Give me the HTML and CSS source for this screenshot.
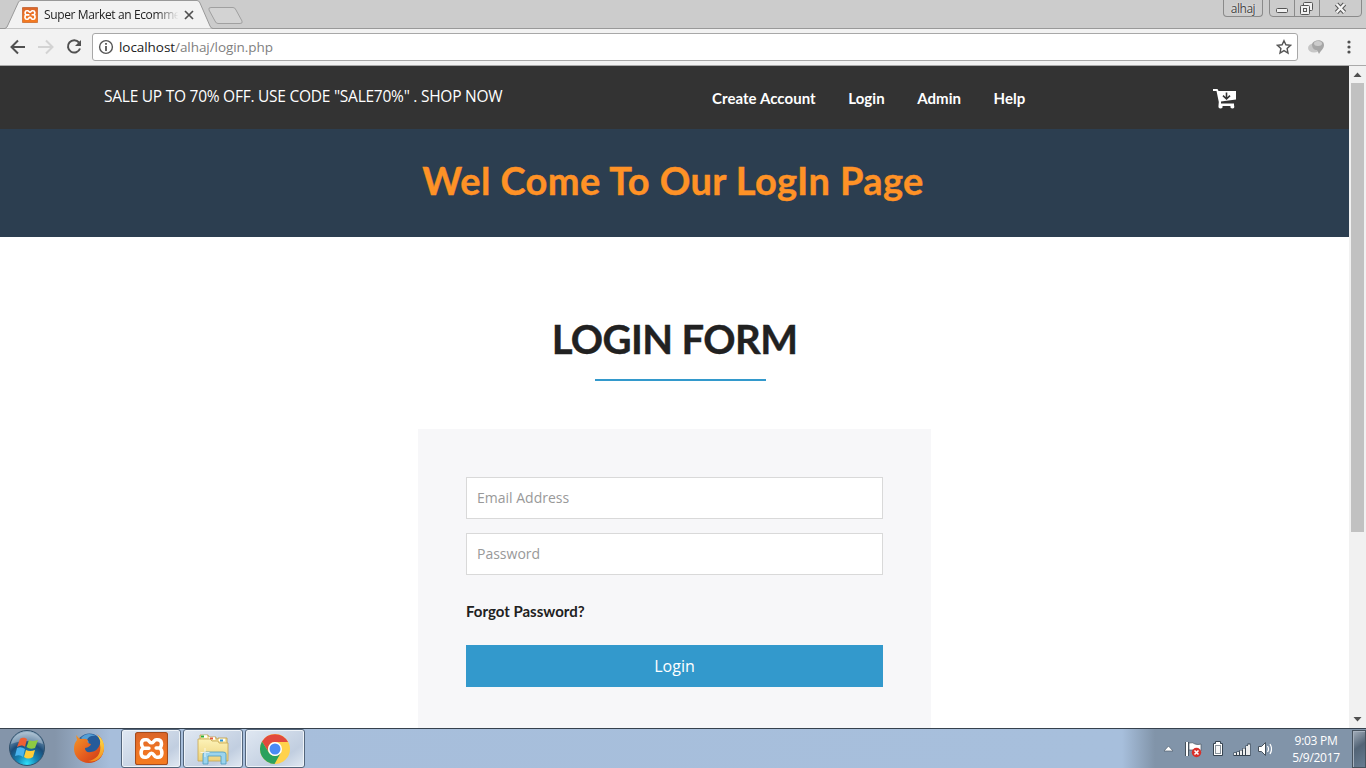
FILE: index.html
```
<!DOCTYPE html>
<html lang="en">
<head>
<meta charset="utf-8">
<title>Super Market an Ecommerce</title>
<link rel="stylesheet" href="styles.css">
</head>
<body>
<svg class="defs" width="0" height="0">
  <defs>
    <linearGradient id="orange" x1="0" y1="0" x2="0" y2="1"><stop offset="0" stop-color="#d9652a"/><stop offset=".5" stop-color="#ee7325"/><stop offset="1" stop-color="#f47b20"/></linearGradient>
    <radialGradient id="orb" cx=".5" cy=".95" r=".95"><stop offset="0" stop-color="#2fe0fa"/><stop offset=".3" stop-color="#1585b5"/><stop offset=".6" stop-color="#1b4c79"/><stop offset="1" stop-color="#9db7cb"/></radialGradient>
    <linearGradient id="fox" x1="0" y1="0" x2="1" y2="1"><stop offset="0" stop-color="#f49b25"/><stop offset=".5" stop-color="#e66020"/><stop offset="1" stop-color="#c93214"/></linearGradient>
    <linearGradient id="foxtail" x1="0" y1="0" x2="0" y2="1"><stop offset="0" stop-color="#ffe44a"/><stop offset="1" stop-color="#f38b1c"/></linearGradient>
    <linearGradient id="folder" x1="0" y1="0" x2="0" y2="1"><stop offset="0" stop-color="#fdf3b8"/><stop offset="1" stop-color="#edd27b"/></linearGradient>
    <symbol id="xampp" viewBox="0 0 32 32">
      <rect x=".5" y=".5" width="31" height="31" rx="2" fill="url(#orange)" stroke="#a54b1c"/>
      <path d="M9.500 7.500H11.500C13.500 7.500 14 10.500 16 10.500C18 10.500 18.500 7.500 20.500 7.500H22C26.500 7.500 26.500 13 24 15.500C27 18 27 24.500 22.500 24.500H21C18.500 24.500 18.500 20.500 16 20.500C13.500 20.500 13.500 24.500 11 24.500H9.500C5 24.500 5 18 8 15.500C5.500 13 5.500 7.500 9.500 7.500ZM8 15.700H13.500M20.500 15.500H24" fill="none" stroke="#fff" stroke-width="3.400" stroke-linejoin="round" stroke-linecap="round"/>
    </symbol>
  </defs>
</svg>
<div class="screen">
  <header class="tabstrip">
    <svg class="tabshape" width="250" height="29" viewBox="0 0 250 29">
      <path d="M0 28.500H5L7 27L18.500 2Q19.500 .5 21 .5H197Q199 .5 200 3L210 26Q211 28.500 213 28.500H250" fill="#f2f2f2" stroke="#999"/>
      <path d="M211 7.500H233Q235 7.500 236 10L242 21Q243 23.500 240 23.500H218Q216 23.500 215 21L209 10Q208 7.500 211 7.500Z" fill="#d3d3d3" stroke="#a0a0a0"/>
    </svg>
    <div class="tab">
      <svg width="16" height="16"><use href="#xampp"/></svg>
      <span class="tabtitle">Super Market an Ecomme</span>
      <svg width="10" height="10"><path d="M1 1L9 9M9 1L1 9" stroke="#505050" stroke-width="1.700"/></svg>
    </div>
    <div class="windowctl">
      <span class="user">alhaj</span>
      <svg width="97" height="18" viewBox="0 0 97 18" fill="none" stroke="#8a8a8a">
        <path d="M.5 0V13Q.5 16.500 4 16.500H89Q92.500 16.500 92.500 13V0M25.500 0V16M50.500 0V16" />
        <g fill="#f1f1f1" stroke="#555"><rect x="7.500" y="8.500" width="11" height="4" rx="1"/><rect x="34.500" y="2.500" width="9" height="8" rx="1"/><rect x="31.500" y="5.500" width="9" height="9" rx="1"/><rect x="34.500" y="8.500" width="3" height="3"/></g>
        <path d="M67.500 4L75.500 12.500M75.500 4L67.500 12.500" stroke="#555" stroke-width="4.400"/><path d="M67.500 4L75.500 12.500M75.500 4L67.500 12.500" stroke="#f4f4f4" stroke-width="2.400"/>
      </svg>
    </div>
  </header>

  <nav class="toolbar">
    <div class="navicons">
      <svg width="16" height="16" fill="none" stroke="#505050" stroke-width="2"><path d="M15 8H2M8 1.500L1.500 8L8 14.500"/></svg>
      <svg width="16" height="16" fill="none" stroke="#d3d3d3" stroke-width="2"><path d="M0 8H14M8 1.500L14.500 8L8 14.500"/></svg>
      <svg width="16" height="16" fill="none" stroke="#505050" stroke-width="2"><path d="M13 3.500A6.200 6.200 0 1 0 14 9.500"/><path d="M15 1V7H9Z" fill="#505050" stroke="none"/></svg>
    </div>
    <div class="address">
      <svg width="16" height="16" fill="none" stroke="#555"><circle cx="8" cy="8" r="6.400" stroke-width="1.400"/><path d="M8 7V12M8 4V5.800" stroke-width="1.800"/></svg>
      <span class="url">localhost<i>/alhaj/login.php</i></span>
      <svg width="16" height="16"><path d="M8 1.700L9.900 5.800L14.500 6.300L11.100 9.400L12 14L8 11.600L4 14L4.900 9.400L1.500 6.300L6.100 5.800Z" fill="none" stroke="#555" stroke-width="1.400"/></svg>
    </div>
    <svg class="ext" width="18" height="16"><ellipse cx="6" cy="9" rx="6" ry="4.500" fill="#c6c6c6"/><path d="M4 5C6 0 16 0 16 6C16 10 13 11 11 15L9 11C6 11 4 9 4 5" fill="#a6a6a6"/><ellipse cx="10" cy="4.500" rx="4" ry="2.500" fill="#ccc"/></svg>
    <svg width="6" height="16" fill="#505050"><circle cx="3" cy="3" r="1.600"/><circle cx="3" cy="8" r="1.600"/><circle cx="3" cy="13" r="1.600"/></svg>
  </nav>

  <div class="viewport">
    <main class="page">
      <div class="topbar">
        <span class="sale">SALE UP TO 70% OFF. USE CODE "SALE70%" . SHOP NOW</span>
        <div class="links"><a>Create Account</a><a>Login</a><a>Admin</a><a>Help</a></div>
        <svg class="cart" width="24" height="20" viewBox="0 0 24 20"><path d="M0 0H4.500L5.500 2H23V10.500L8 12.500V14.500H21V16Q22 19.500 19.500 19.500Q17 19.500 17.500 17H9.500Q10 19.500 7.500 19.500Q5 19.500 5.500 16.500L5.800 13L3.500 2H0Z" fill="#fff"/><path d="M13.500 3.500V10M10 6.700L13.500 10L17 6.700" fill="none" stroke="#333" stroke-width="1.600"/></svg>
      </div>
      <div class="banner"><h1>Wel Come To Our LogIn Page</h1></div>
      <section class="login">
        <h2>LOGIN FORM</h2>
        <div class="rule"></div>
        <form class="card">
          <input type="text" placeholder="Email Address">
          <input type="password" placeholder="Password">
          <a class="forgot"><span>Forgot Password?</span></a>
          <button type="button">Login</button>
        </form>
      </section>
    </main>
    <aside class="scroll">
      <svg width="17" height="17"><path d="M4.500 11H12.500L8.500 6.500Z" fill="#505050"/></svg>
      <div class="thumb"></div>
      <svg class="down" width="17" height="17"><path d="M4.500 6H12.500L8.500 10.500Z" fill="#505050"/></svg>
    </aside>
  </div>

  <footer class="taskbar">
    <div class="start">
      <svg width="38" height="38" viewBox="0 0 38 38"><circle cx="19" cy="19" r="17.500" fill="url(#orb)" stroke="#31516c"/><path d="M3 15C6-1 32-1 35 15C25 11 13 11 3 15" fill="#fff" opacity=".3"/><path d="M12 10C15 8 17 9 19 10L17 18C15 16 12 16 9 18Z" fill="#ee6034"/><path d="M21 11Q24 13 30 11L27 19Q22 21 18.500 18Z" fill="#8dca42"/><path d="M9 19Q13 17 17 20L15 28Q12 25 7 27Z" fill="#49b3ee"/><path d="M18 21Q22 23 27 21L25 28Q20 31 16 28Z" fill="#ffcd38"/></svg>
    </div>
    <div class="pinned">
      <svg width="32" height="32" viewBox="0 0 32 32"><circle cx="16.500" cy="14.500" r="13" fill="#265b9a"/><path d="M8 6Q14-1 23 4Q16 3 14 8Q18 11 13 12" fill="#549fd5"/><path d="M3 3Q5 6 8 7Q12 6 15 8Q13 11 18 12Q17 15 12 16Q12 21 18 20Q25 19 27 12C29 5 25 4 23 2Q30 5 31 15C31 26 23 31 16 31C7 31 1 24 1 17Q1 11 4 8Z" fill="url(#fox)"/><path d="M24 3Q32 8 31 17C30 27 21 31 15 29C23 28 29 22 27 12Q28 8 24 3" fill="url(#foxtail)"/></svg>
    </div>
    <div class="task"><svg width="33" height="33"><use href="#xampp"/></svg></div>
    <div class="task">
      <svg width="34" height="34" viewBox="0 0 34 34"><path d="M4 5V3H12L13 5H20V7H22V6H31V25H4Z" fill="#f5e59e" stroke="#bd9d48" stroke-width=".8"/><path d="M5 4.500H11M13 6.500H19M23 8H29" stroke="#fff" stroke-width="2.400"/><path d="M5 4.500H8" stroke="#2caf32" stroke-width="2"/><path d="M14 6.500H17" stroke="#e45535" stroke-width="2"/><path d="M24 8.500H27" stroke="#2b93d2" stroke-width="2"/><path d="M2 7H14L16 9H22L23 11H32V29H2Z" fill="url(#folder)" stroke="#c7a650" stroke-width=".8"/><path d="M7 32V22Q7 20 10 20H27Q30 20 30 22V32H25V24H12V32Z" fill="#9bd4ed" stroke="#4b9abf" stroke-width=".8"/><path d="M9 16V25M4.500 20.500H13.500" stroke="#fff" opacity=".7"/></svg>
    </div>
    <div class="task">
      <svg width="32" height="32" viewBox="0 0 32 32"><circle cx="16" cy="16" r="15" fill="#ffd24b"/><path d="M3 8.500A15 15 0 0 1 29 9H16A7 7 0 0 0 9.900 19.500Z" fill="#e24a3d"/><path d="M3 8.500A15 15 0 0 0 15.500 31L22 19.500A7 7 0 0 1 9.900 19.500Z" fill="#2ba15d"/><circle cx="16" cy="16" r="7" fill="#fff"/><circle cx="16" cy="16" r="5.500" fill="#4b8bf4"/></svg>
    </div>
    <div class="tray">
      <svg width="112" height="20" viewBox="0 0 112 20">
        <path d="M4 12L8.500 7L13 12Z" fill="#fff" stroke="#52606f" stroke-width=".7"/>
        <path d="M27 3V17" stroke="#46515c" stroke-width="4"/><path d="M27 3V17" stroke="#fff" stroke-width="2"/><path d="M29 4Q33 3 35 5Q38 6 41 5V12Q36 13 33 11H29Z" fill="#fff" stroke="#4b5661" stroke-width=".7"/><circle cx="36.500" cy="13.500" r="4.700" fill="#d92f29"/><path d="M34.500 11.500L38.500 15.500M38.500 11.500L34.500 15.500" stroke="#fff" stroke-width="1.600"/>
        <path d="M55.500 4.500V2.500H60.500V4.500H62.500V16.500H53.500V4.500Z" fill="#fff" stroke="#354350"/><rect x="55.500" y="6.500" width="5" height="8" fill="#f7f7f7" stroke="#8b949c"/>
        <path d="M75 17V13.500M78 17V12.500M81 17V11M84 17V9M87 17V6.500M89 17V4.500" stroke="#34414e" stroke-width="3"/><path d="M75 16V14M78 16V13M81 16V11.500M84 16V9.500M87 16V7M89 16V5.500" stroke="#fff" stroke-width="1.800"/>
        <path d="M98.500 7.500H101.500L105.500 3.500V16.500L101.500 12.500H98.500Z" fill="#fff" stroke="#46515c"/><path d="M107.500 7Q109.500 10 107.500 13M110 5Q113 10 110 15" fill="none" stroke="#fff" stroke-width="1.200"/>
      </svg>
      <div class="clock"><span>9:03 PM</span><span class="date">5/9/2017</span></div>
      <div class="peek"></div>
    </div>
  </footer>
</div>
</body>
</html>
```
FILE: styles.css
```
* { box-sizing: border-box; }
body { margin: 0; overflow: hidden; font-family: "Open Sans", sans-serif; }
svg { display: block; flex: none; }
.defs { position: absolute; }
.screen { width: 1366px; height: 768px; display: flex; flex-direction: column; }
.tabstrip { height: 29px; flex: none; display: flex; justify-content: space-between; background: #ccc; position: relative; border-bottom: 1px solid #999; }
.tabshape { position: absolute; left: 0; top: 0; }
.tab { position: relative; display: flex; align-items: center; height: 29px; padding: 1px 0 0 22px; }
.tabtitle { width: 140px; white-space: nowrap; margin-left: 6px; font: 12px/18px "Open Sans", sans-serif; letter-spacing: -.38px; color: #222; -webkit-mask-image: linear-gradient(90deg, #000 80%, transparent 96%); mask-image: linear-gradient(90deg, #000 80%, transparent 96%); }
.windowctl { display: flex; gap: 6px; }
.user { width: 40px; height: 17px; border: 1px solid #8a8a8a; border-top: 0; border-radius: 0 0 4px 4px; font: 12px/17px "Open Sans", sans-serif; text-align: center; color: #444; text-shadow: 0 0 2px #fff; letter-spacing: -.5px; }
.toolbar { height: 37px; flex: none; background: #f2f2f2; border-bottom: 1px solid #aaa; display: flex; align-items: center; padding: 0 0 0 10px; }
.navicons { display: flex; gap: 12px; width: 82px; flex: none; }
.address { width: 1206px; flex: none; height: 28px; display: flex; align-items: center; border: 1px solid #a8a8a8; border-radius: 3px; background: #fff; padding: 0 5px; }
.url { flex: 1; margin-left: 5px; font-size: 13.5px; line-height: 18px; color: #222; letter-spacing: -.06px; }
.url i { color: #808080; font-style: normal; }
.ext { margin: 0 20px 0 10px; }
.viewport { flex: 1; min-height: 0; display: flex; }
.page { width: 1349px; overflow: hidden; background: #fff; }
.topbar { height: 63px; background: #333; color: #fff; display: flex; align-items: center; padding: 0 0 0 104px; }
.sale { width: 608px; flex: none; font-size: 15.5px; line-height: 20px; padding-bottom: 3px; white-space: nowrap; letter-spacing: -.25px; }
.links { display: flex; width: 501px; gap: 32.5px; font: 700 15px/20px Lato, sans-serif; letter-spacing: .06px; white-space: nowrap; }
.cart { margin-top: 3px; }
.banner { height: 108px; background: #2c3e50; padding-top: 29px; text-align: center; }
h1, h2 { margin: 0; font-family: Lato, sans-serif; font-weight: 700; white-space: nowrap; }
h1 { color: #ff9226; font-size: 38px; line-height: 44px; letter-spacing: .4px; margin-right: 3px; -webkit-text-stroke: .4px #ff9226; }
.login { padding-top: 78px; }
h2 { font-size: 40px; line-height: 48px; letter-spacing: -.6px; text-align: center; color: #212121; -webkit-text-stroke: .4px #212121; }
.rule { width: 171px; height: 2px; margin: 16px 0 48px 595px; background: #3399cc; }
.card { width: 513px; height: 360px; margin-left: 418px; padding: 48px; display: flex; flex-direction: column; background: #f7f7f9; }
input { height: 42px; flex: none; margin: 0 0 14px; padding: 0 10px 2px; border: 1px solid #d9d9d9; font: 14px "Open Sans", sans-serif; border-radius: 0; }
input::placeholder { color: #999; }
.forgot { height: 56px; padding-top: 12px; font: 700 15px/20px Lato, sans-serif; letter-spacing: 0; color: #212121; }
button { height: 42px; border: 0; background: #3399cc; color: #fff; font: 16px "Open Sans", sans-serif; padding: 0; }
.scroll { width: 17px; background: #f1f1f1; display: flex; flex-direction: column; align-items: center; }
.thumb { width: 13px; height: 449px; background: #c1c1c1; }
.down { margin-top: auto; }
.taskbar { height: 40px; flex: none; display: flex; border-top: 1px solid #36414d; background: linear-gradient(90deg, #8495aa 0, #8495aa 55px, #a7bedb 110px, #a7bfdc 1122px, #8194a9 1155px, #8194a9); }
.start { width: 62px; padding-left: 8px; }
.pinned { width: 59px; padding: 3px 0 0 11px; }
.task { width: 60px; height: 39px; margin-right: 2px; display: flex; align-items: center; justify-content: center; border: 1px solid #53657b; border-radius: 3px; background: linear-gradient(145deg, #e0e8f2, #c1cee0 70%, #e1e9f2); box-shadow: inset 0 0 0 1px #eef3f8; }
.tray { margin-left: auto; display: flex; align-items: center; }
.clock { width: 62px; height: 36px; margin: 0 5px 0 13px; padding-top: 1px; display: flex; flex-direction: column; align-items: center; font: 12px/17px "Open Sans", sans-serif; color: #fff; letter-spacing: -.3px; }
.peek { width: 14px; height: 38px; border: 1px solid #47535f; box-shadow: inset 1px 1px #a7b2bf; background: linear-gradient(145deg, #a3aebb, #536476 45%, #687d92); }
```
